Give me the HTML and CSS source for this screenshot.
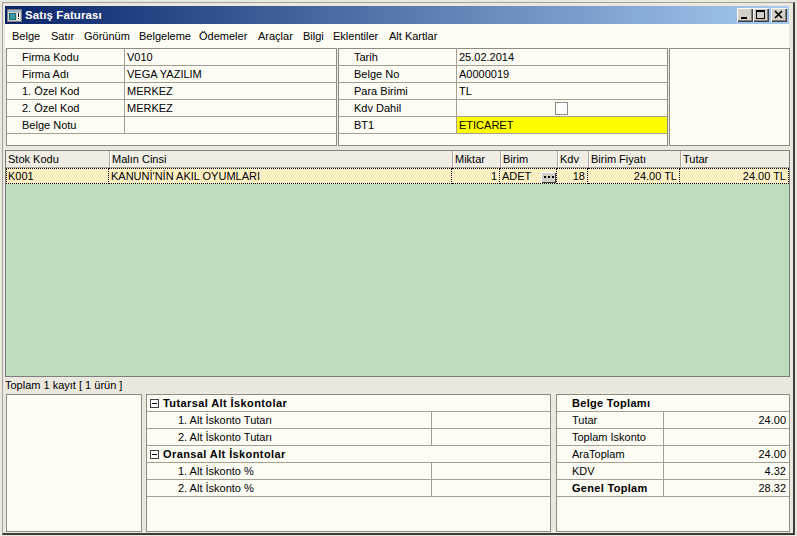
FILE: index.html
```html
<!DOCTYPE html>
<html lang="tr">
<head>
<meta charset="utf-8">
<title>Satış Faturası</title>
<link rel="stylesheet" href="styles.css">
</head>
<body>
<div class="frame">
  <div class="win">
    <div class="titlebar">
      <svg class="appicon" width="15" height="13" viewBox="0 0 15 13">
        <rect x="0.5" y="0.5" width="14" height="12" fill="#d4d0c8" stroke="#808080"/>
        <rect x="1" y="1" width="13" height="2" fill="#9db4d0"/>
        <rect x="2" y="4" width="7" height="7" fill="#1f6f78"/>
        <rect x="3" y="5" width="5" height="5" fill="#3a9aa0"/>
        <rect x="10" y="4" width="3" height="7" fill="#ffffff"/>
        <rect x="11" y="4" width="1" height="4" fill="#000"/>
        <rect x="11" y="9" width="1" height="1" fill="#000"/>
      </svg>
      <span class="title">Satış Faturası</span>
      <div class="wbtns">
        <span class="wbtn"><svg width="16" height="14" viewBox="0 0 16 14"><rect x="4" y="9" width="6" height="2" fill="#000"/></svg></span>
        <span class="wbtn"><svg width="16" height="14" viewBox="0 0 16 14"><rect x="3" y="2" width="9" height="2" fill="#000"/><rect x="3" y="2" width="1" height="9" fill="#000"/><rect x="11" y="2" width="1" height="9" fill="#000"/><rect x="3" y="10" width="9" height="1" fill="#000"/></svg></span>
        <span class="wbtn close"><svg width="16" height="14" viewBox="0 0 16 14"><path d="M4 3 L11 10 M11 3 L4 10" stroke="#000" stroke-width="1.7"/></svg></span>
      </div>
    </div>

    <div class="menubar">
      <span>Belge</span><span>Satır</span><span>Görünüm</span><span>Belgeleme</span><span>Ödemeler</span><span>Araçlar</span><span>Bilgi</span><span>Eklentiler</span><span>Alt Kartlar</span>
    </div>

    <div class="header">
      <div class="panel hl">
        <div class="frow"><div class="lbl">Firma Kodu</div><div class="val">V010</div></div>
        <div class="frow"><div class="lbl">Firma Adı</div><div class="val">VEGA YAZILIM</div></div>
        <div class="frow"><div class="lbl">1. Özel Kod</div><div class="val">MERKEZ</div></div>
        <div class="frow"><div class="lbl">2. Özel Kod</div><div class="val">MERKEZ</div></div>
        <div class="frow"><div class="lbl">Belge Notu</div><div class="val"></div></div>
      </div>
      <div class="panel hm">
        <div class="frow"><div class="lbl">Tarih</div><div class="val">25.02.2014</div></div>
        <div class="frow"><div class="lbl">Belge No</div><div class="val">A0000019</div></div>
        <div class="frow"><div class="lbl">Para Birimi</div><div class="val">TL</div></div>
        <div class="frow"><div class="lbl">Kdv Dahil</div><div class="val center"><span class="chk"></span></div></div>
        <div class="frow"><div class="lbl">BT1</div><div class="val yellow">ETICARET</div></div>
      </div>
      <div class="panel hr"></div>
    </div>

    <div class="grid">
      <div class="ghead cols">
        <div>Stok Kodu</div><div>Malın Cinsi</div><div>Miktar</div><div>Birim</div><div>Kdv</div><div>Birim Fiyatı</div><div>Tutar</div>
      </div>
      <div class="grow cols">
        <div>K001</div>
        <div>KANUNİ'NİN AKIL OYUMLARI</div>
        <div class="r">1</div>
        <div class="birim"><span>ADET</span><span class="dots"><svg width="13" height="9" viewBox="0 0 13 9"><rect x="2" y="4" width="2" height="2" fill="#000"/><rect x="6" y="4" width="2" height="2" fill="#000"/><rect x="10" y="4" width="2" height="2" fill="#000"/></svg></span></div>
        <div class="r">18</div>
        <div class="r">24.00 TL</div>
        <div class="r">24.00 TL</div>
      </div>
      <div class="gfill"></div>
    </div>

    <div class="status">Toplam 1 kayıt [ 1 ürün ]</div>

    <div class="bottom">
      <div class="bpanel bl"></div>
      <div class="bpanel bm">
        <div class="bhead"><span class="exp"></span><span>Tutarsal Alt İskontolar</span></div>
        <div class="brow"><div class="blbl ind">1. Alt İskonto Tutarı</div><div class="bval"></div></div>
        <div class="brow"><div class="blbl ind">2. Alt İskonto Tutarı</div><div class="bval"></div></div>
        <div class="bhead"><span class="exp"></span><span>Oransal Alt İskontolar</span></div>
        <div class="brow"><div class="blbl ind">1. Alt İskonto %</div><div class="bval"></div></div>
        <div class="brow"><div class="blbl ind">2. Alt İskonto %</div><div class="bval"></div></div>
      </div>
      <div class="bpanel br">
        <div class="bhead tot">Belge Toplamı</div>
        <div class="brow"><div class="blbl tl">Tutar</div><div class="bval r">24.00</div></div>
        <div class="brow"><div class="blbl tl">Toplam Iskonto</div><div class="bval r"></div></div>
        <div class="brow"><div class="blbl tl">AraToplam</div><div class="bval r">24.00</div></div>
        <div class="brow"><div class="blbl tl">KDV</div><div class="bval r">4.32</div></div>
        <div class="brow"><div class="blbl tl strong">Genel Toplam</div><div class="bval r">28.32</div></div>
      </div>
    </div>
  </div>
</div>
</body>
</html>
```

FILE: styles.css
```css
* { box-sizing: border-box; }
html, body { margin: 0; padding: 0; }
body {
  width: 797px;
  height: 536px;
  overflow: hidden;
  background: #ebe8de;
  font-family: "Liberation Sans", Arial, sans-serif;
  font-size: 11px;
  color: #000;
}
.frame {
  width: 797px;
  height: 536px;
  padding: 2px 2px 1px 2px;
}
.win {
  height: 100%;
  display: flex;
  flex-direction: column;
  border-top: 1px solid #a3a3a3;
  border-left: 1px solid #a3a3a3;
  border-right: 2px solid #3c3c3c;
  border-bottom: 2px solid #3c3c3c;
  padding: 3px 4px 1px 2px;
}

/* title bar */
.titlebar {
  height: 18px;
  flex-shrink: 0;
  display: flex;
  align-items: center;
  background: linear-gradient(to right, #0a246a, #a6caf0);
}
.appicon { display: block; margin-left: 2px; }
.title {
  margin-left: 3px;
  color: #fff;
  font-weight: bold;
  font-size: 11.5px;
  letter-spacing: 0.1px;
}
.wbtns {
  margin-left: auto;
  margin-right: 2px;
  display: flex;
}
.wbtn {
  display: block;
  width: 16px;
  height: 14px;
  background: #d4d0c8;
  box-shadow: inset 1px 1px #ffffff, inset -1px -1px #404040, inset -2px -2px #808080;
}
.wbtn svg { display: block; }
.wbtn.close { margin-left: 2px; }

/* menu */
.menubar {
  height: 24px;
  flex-shrink: 0;
  background: #fdfcf5;
  display: grid;
  grid-template-columns: 39px 33px 55px 60px 59px 45px 30px 56px auto;
  padding-left: 7px;
  line-height: 24px;
  white-space: nowrap;
}

/* header panels */
.header {
  height: 98px;
  flex-shrink: 0;
  display: flex;
}
.panel {
  border: 1px solid #8f8c84;
  background: #fdfcf5;
}
.hl { width: 331px; margin-left: 1px; }
.hm { width: 330px; margin-left: 1px; }
.hr { flex: 1; margin-left: 1px; margin-right: -1px; }
.frow {
  display: flex;
  height: 17px;
  border-bottom: 1px solid #a49f90;
}
.lbl {
  width: 118px;
  border-right: 1px solid #a49f90;
  padding-left: 15px;
  line-height: 16px;
  white-space: nowrap;
}
.val {
  flex: 1;
  padding-left: 2px;
  line-height: 16px;
  white-space: nowrap;
}
.val.center {
  display: flex;
  align-items: center;
  justify-content: center;
  padding-left: 0;
  padding-right: 2px;
}
.chk {
  display: block;
  width: 13px;
  height: 13px;
  border: 1px solid #8c8c8c;
  background: #fff;
}
.val.yellow { background: #ffff00; }

/* grid */
.grid {
  margin-top: 4px;
  margin-right: -1px;
  height: 227px;
  flex-shrink: 0;
  border: 1px solid #7f7f7f;
  display: flex;
  flex-direction: column;
  background: #c0dcc0;
}
.cols {
  display: grid;
  grid-template-columns: 103px 343px 48px 57px 31px 92px 1fr;
}
.ghead {
  height: 17px;
  background: #efede4;
  border-bottom: 1px solid #aca899;
}
.ghead div {
  padding-left: 2px;
  line-height: 16px;
  border-left: 1px solid #aca899;
  box-shadow: inset 1px 0 #ffffff;
  white-space: nowrap;
}
.ghead div:first-child { border-left: none; box-shadow: none; }
.grow {
  height: 16px;
  background: #fff0c4;
}
.grow div {
  border-top: 1px dotted #000;
  border-bottom: 1px dotted #000;
  border-right: 1px dotted #000;
  padding: 0 2px;
  line-height: 14px;
  white-space: nowrap;
  overflow: hidden;
}
.grow div:first-child { border-left: 1px dotted #000; padding-left: 1px; }
.grow .r, .r { text-align: right; }
.grow .birim {
  display: flex;
  align-items: center;
  justify-content: space-between;
  padding-right: 0;
}
.dots {
  display: block;
  width: 15px;
  height: 11px;
  margin-top: 2px;
  background: #d4d0c8;
  box-shadow: inset 1px 1px #ffffff, inset -1px -1px #404040;
}
.dots svg { display: block; margin: 0 0 0 1px; }
.gfill { flex: 1; }

/* status */
.status {
  height: 17px;
  flex-shrink: 0;
  line-height: 16px;
  white-space: nowrap;
}

/* bottom panels */
.bottom {
  flex: 1;
  display: flex;
  min-height: 0;
}
.bpanel {
  border: 1px solid #8f8c84;
  background: #fdfcf5;
}
.bl { width: 136px; margin-left: 1px; }
.bm { width: 405px; margin-left: 4px; }
.br { flex: 1; margin-left: 5px; margin-right: -1px; }
.bhead {
  height: 17px;
  border-bottom: 1px solid #a49f90;
  display: flex;
  align-items: center;
  padding-left: 3px;
  font-weight: bold;
  letter-spacing: 0.4px;
  white-space: nowrap;
}
.bhead.tot { padding-left: 15px; letter-spacing: 0.3px; }
.exp {
  position: relative;
  display: block;
  width: 9px;
  height: 9px;
  border: 1px solid #444;
  background: #fff;
  margin-right: 4px;
}
.exp::after {
  content: "";
  position: absolute;
  left: 1px;
  top: 3px;
  width: 5px;
  height: 1px;
  background: #000;
}
.brow {
  display: flex;
  height: 17px;
  border-bottom: 1px solid #a49f90;
}
.blbl {
  border-right: 1px solid #a49f90;
  line-height: 16px;
  white-space: nowrap;
}
.blbl.ind { width: 285px; padding-left: 31px; }
.blbl.tl { width: 107px; padding-left: 15px; }
.blbl.strong { font-weight: bold; letter-spacing: 0.3px; }
.bval {
  flex: 1;
  line-height: 16px;
  padding-right: 3px;
}
```
